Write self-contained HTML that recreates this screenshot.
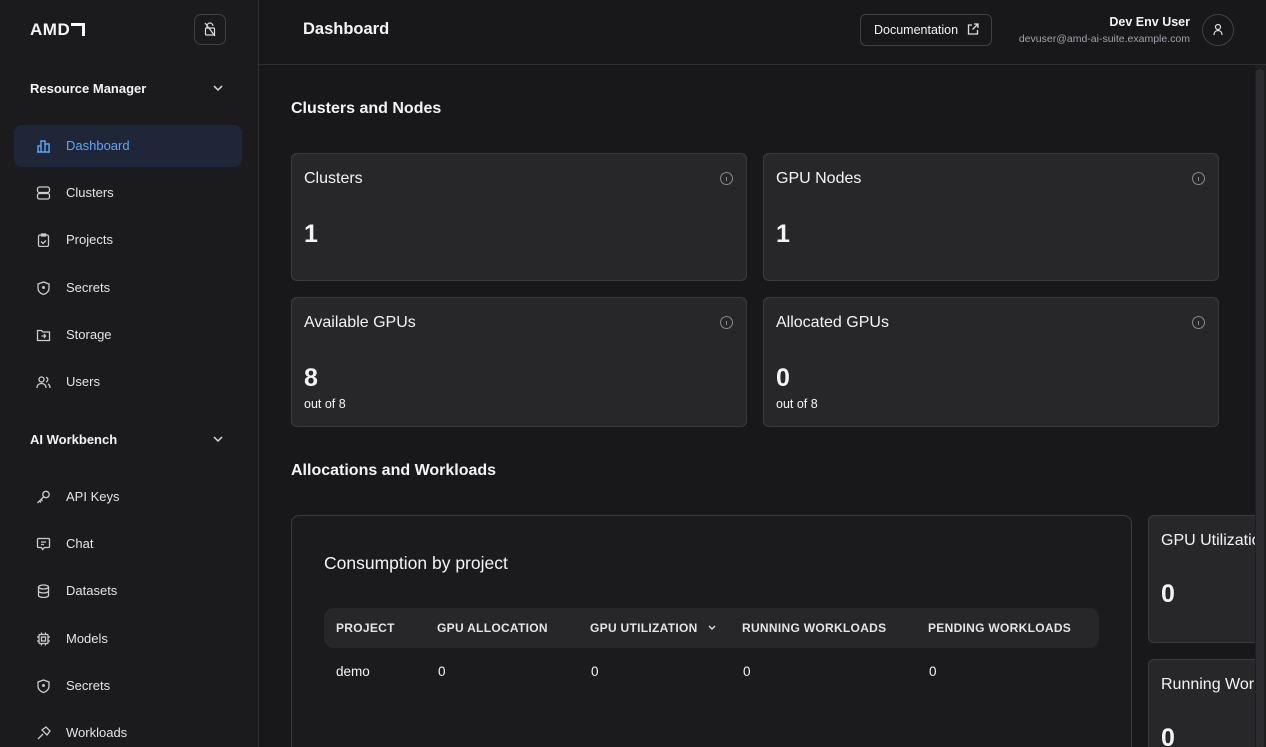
<!DOCTYPE html>
<html><head><meta charset="utf-8"><style>
*{box-sizing:border-box;margin:0;padding:0}
html,body{width:1266px;height:747px;overflow:hidden}
body{background:#18181b;color:#f4f4f5;font-family:"Liberation Sans",sans-serif;position:relative}
.side{position:absolute;left:0;top:0;width:259px;height:747px;background:#1b1b1e;border-right:1px solid #2e2e33}
.logo{position:absolute;left:30px;top:20px;font-weight:bold;font-size:17px;letter-spacing:0.5px}
.tbtn{position:absolute;left:194px;top:14px;width:32px;height:31px;border:1px solid #3f3f46;border-radius:7px}
.sec{position:absolute;left:30px;font-size:13px;font-weight:bold}
.chev{position:absolute;left:212px}
.item{position:absolute;left:14px;width:228px;height:42px;border-radius:8px;font-size:13px;color:#e4e4e7}
.item span{position:absolute;left:52px;top:13px}
.item svg{position:absolute;left:22px;top:14px}
.item.act{background:#1e2638;color:#60a5fa}
.hdr{position:absolute;left:259px;top:0;right:0;height:65px;border-bottom:1px solid #2e2e33}
.h1{position:absolute;left:303px;top:20px;font-size:16.5px;font-weight:bold}
.doc{position:absolute;left:860px;top:14px;width:132px;height:32px;border:1px solid #3f3f46;border-radius:6px;font-size:12.5px;padding:8px 0 0 13px}
.uname{position:absolute;right:76px;top:15px;font-size:12.5px;font-weight:bold}
.umail{position:absolute;right:76px;top:33px;font-size:10.5px;color:#a1a1aa}
.avatar{position:absolute;left:1202px;top:14px;width:32px;height:32px;border:1px solid #3f3f46;border-radius:50%}
.h2{position:absolute;left:291px;font-size:16px;font-weight:bold}
.card{position:absolute;background:#27272a;border:1px solid #3a3a40;border-radius:6px}
.card .t{position:absolute;left:12px;top:16px;font-size:16px}
.card .v{position:absolute;left:12px;top:66px;font-size:25px;font-weight:bold}
.card .s{position:absolute;left:12px;top:99px;font-size:12.5px}
.info{position:absolute;right:13px;top:18px;width:13px;height:13px;border:1.2px solid #8a8a92;border-radius:50%}
.info:after{content:"";position:absolute;left:4.6px;top:4px;width:1.5px;height:4px;background:#8a8a92}
.big{position:absolute;left:291px;top:515px;width:841px;height:260px;border:1px solid #3a3a40;border-radius:8px;background:#1b1b1e}
.th{position:absolute;left:32px;top:92px;width:775px;height:40px;background:#27272a;border-radius:10px}
.th div,.tr div{position:absolute;font-size:12px}
.th div{top:13px;font-weight:bold;color:#e4e4e7;letter-spacing:0.3px}
.tr div{top:148px;font-size:13.5px}
.sb{position:absolute;left:1255px;top:65px;width:11px;height:682px;background:#1e1e21;z-index:5}
.sb div{position:absolute;left:1px;top:4px;width:8px;height:680px;background:#2c2c30;border-radius:4px}
</style></head><body>
<div class="side">
 <div class="logo">AMD<span style="display:inline-block;width:14px;height:13px;margin-left:1px;border-top:3px solid #fff;border-right:3px solid #fff;vertical-align:-1px"></span></div>
 <div class="tbtn"><svg width="30" height="29" viewBox="0 0 30 29"><g fill="none" stroke="#ddd" stroke-width="1.2"><rect x="10.5" y="13" width="9" height="7" rx="1"/><path d="M12 13v-2a3 3 0 0 1 6 0M10 8l10 13"/></g></svg></div>
 <div class="sec" style="top:81px">Resource Manager</div>
 <svg class="chev" style="top:84px" width="12" height="8"><path d="M2 2l4 4 4-4" fill="none" stroke="#ddd" stroke-width="1.5"/></svg>
 <div class="item act" style="top:125px"><svg width="15" height="14" fill="none" stroke="#60a5fa" stroke-width="1.4"><path d="M1 13h13M2 13V7h3v6M5 13V2h4v11M9 13V5h4v8"/></svg><span>Dashboard</span></div>
 <div class="item" style="top:172px"><svg width="15" height="14" fill="none" stroke="#ccc" stroke-width="1.3"><rect x="1.5" y="1" width="12" height="5.5" rx="2"/><rect x="1.5" y="7.5" width="12" height="5.5" rx="2"/></svg><span>Clusters</span></div>
 <div class="item" style="top:219px"><svg width="15" height="14" fill="none" stroke="#ccc" stroke-width="1.3"><rect x="2.5" y="2" width="10" height="11.5" rx="1.5"/><path d="M5.5 1h4v2h-4zM5 8.5l2 2 3-3"/></svg><span>Projects</span></div>
 <div class="item" style="top:267px"><svg width="15" height="14" fill="none" stroke="#ccc" stroke-width="1.3"><path d="M7.5 1l5.5 2v4c0 3.5-2.5 5.5-5.5 6.5C4.5 12.5 2 10.5 2 7V3z"/><circle cx="7.5" cy="6.5" r="0.8"/></svg><span>Secrets</span></div>
 <div class="item" style="top:314px"><svg width="15" height="14" fill="none" stroke="#ccc" stroke-width="1.3"><path d="M1.5 2.5h4l1.5 1.5h6.5v8.5h-12z M5.5 8h4M8 6l1.5 2L8 10"/></svg><span>Storage</span></div>
 <div class="item" style="top:361px"><svg width="15" height="14" fill="none" stroke="#ccc" stroke-width="1.3"><circle cx="5.5" cy="4.5" r="2.5"/><path d="M1 13c0-3 2-4.5 4.5-4.5S10 10 10 13M10 2.2a2.5 2.5 0 0 1 0 4.8M12 9c1.3.6 2 2 2 4"/></svg><span>Users</span></div>
 <div class="sec" style="top:432px">AI Workbench</div>
 <svg class="chev" style="top:435px" width="12" height="8"><path d="M2 2l4 4 4-4" fill="none" stroke="#ddd" stroke-width="1.5"/></svg>
 <div class="item" style="top:476px"><svg width="15" height="14" fill="none" stroke="#ccc" stroke-width="1.3"><circle cx="10" cy="4.5" r="3.2"/><path d="M7.5 7l-6 6M3.5 11l1.5 1.5M5 9.5l1.5 1.5"/></svg><span>API Keys</span></div>
 <div class="item" style="top:523px"><svg width="15" height="14" fill="none" stroke="#ccc" stroke-width="1.3"><path d="M2.5 1.5h10a1 1 0 0 1 1 1v7a1 1 0 0 1-1 1h-4l-2 2-1-2h-3a1 1 0 0 1-1-1v-7a1 1 0 0 1 1-1zM5 5h5M5 7.5h3"/></svg><span>Chat</span></div>
 <div class="item" style="top:570px"><svg width="15" height="14" fill="none" stroke="#ccc" stroke-width="1.3"><ellipse cx="7.5" cy="3" rx="5" ry="2"/><path d="M2.5 3v8.5c0 1.1 2.2 2 5 2s5-.9 5-2V3M2.5 7c0 1.1 2.2 2 5 2s5-.9 5-2"/></svg><span>Datasets</span></div>
 <div class="item" style="top:618px"><svg width="15" height="14" fill="none" stroke="#ccc" stroke-width="1.3"><rect x="3" y="2.5" width="9" height="9" rx="1"/><rect x="5.5" y="5" width="4" height="4"/><path d="M1 5h2M1 9h2M12 5h2M12 9h2M5.5 0.5v2M9.5 0.5v2M5.5 11.5v2M9.5 11.5v2"/></svg><span>Models</span></div>
 <div class="item" style="top:665px"><svg width="15" height="14" fill="none" stroke="#ccc" stroke-width="1.3"><path d="M7.5 1l5.5 2v4c0 3.5-2.5 5.5-5.5 6.5C4.5 12.5 2 10.5 2 7V3z"/><circle cx="7.5" cy="6.5" r="0.8"/></svg><span>Secrets</span></div>
 <div class="item" style="top:712px"><svg width="15" height="14" fill="none" stroke="#ccc" stroke-width="1.3"><path d="M2 13l5-5M6 4l4-3 4 4-3 4z"/></svg><span>Workloads</span></div>
</div>
<div class="hdr"></div>
<div class="h1">Dashboard</div>
<div class="doc">Documentation <svg width="12" height="12" style="margin-left:5px;vertical-align:-1px" fill="none" stroke="#ddd" stroke-width="1.3"><path d="M5 2H1.5v9h9V7M7 1h4v4M11 1L5.5 6.5"/></svg></div>
<div class="uname">Dev Env User</div>
<div class="umail">devuser@amd-ai-suite.example.com</div>
<div class="avatar"><svg width="30" height="30" fill="none" stroke="#ddd" stroke-width="1.2"><circle cx="15" cy="12" r="2.5"/><path d="M11 20c0-3 1.8-4.5 4-4.5s4 1.5 4 4.5"/></svg></div>
<div class="h2" style="top:100px">Clusters and Nodes</div>
<div class="card" style="left:291px;top:153px;width:456px;height:128px"><div class="t">Clusters</div><div class="info"></div><div class="v">1</div></div>
<div class="card" style="left:763px;top:153px;width:456px;height:128px"><div class="t">GPU Nodes</div><div class="info"></div><div class="v">1</div></div>
<div class="card" style="left:291px;top:297px;width:456px;height:130px"><div class="t">Available GPUs</div><div class="info"></div><div class="v">8</div><div class="s">out of 8</div></div>
<div class="card" style="left:763px;top:297px;width:456px;height:130px"><div class="t">Allocated GPUs</div><div class="info"></div><div class="v">0</div><div class="s">out of 8</div></div>
<div class="h2" style="top:462px">Allocations and Workloads</div>
<div class="big">
 <div style="position:absolute;left:32px;top:37px;font-size:17.5px">Consumption by project</div>
 <div class="th"><div style="left:12px">PROJECT</div><div style="left:113px">GPU ALLOCATION</div><div style="left:266px">GPU UTILIZATION <svg width="10" height="8" style="margin-left:6px"><path d="M2 2l3 3 3-3" fill="none" stroke="#ddd" stroke-width="1.4"/></svg></div><div style="left:418px">RUNNING WORKLOADS</div><div style="left:604px">PENDING WORKLOADS</div></div>
 <div class="tr"><div style="left:44px">demo</div><div style="left:146px">0</div><div style="left:299px">0</div><div style="left:451px">0</div><div style="left:637px">0</div></div>
</div>
<div class="card" style="left:1148px;top:515px;width:107px;height:128px;overflow:hidden;border-right:none;border-radius:6px 0 0 6px"><div class="t" style="white-space:nowrap">GPU Utilization</div><div class="v" style="top:64px">0</div></div>
<div class="card" style="left:1148px;top:659px;width:107px;height:120px;overflow:hidden;border-right:none;border-radius:6px 0 0 6px"><div class="t" style="white-space:nowrap">Running Workloads</div><div class="v" style="top:64px">0</div></div>
<div class="sb"><div></div></div>
</body></html>
